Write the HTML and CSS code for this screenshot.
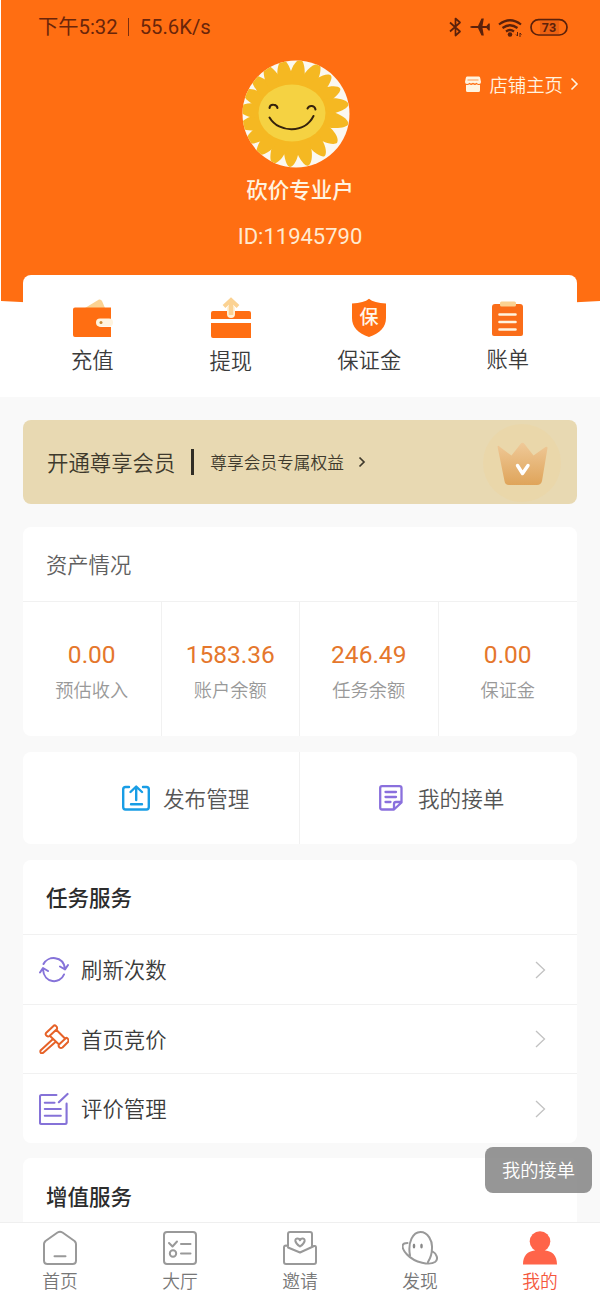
FILE: index.html
```html
<!DOCTYPE html>
<html lang="zh-CN">
<head>
<meta charset="utf-8">
<title>我的</title>
<link rel="stylesheet" href="styles.css">
</head>
<body>
<main class="page">
  <section class="hero">
    <svg class="hero-bg" viewBox="0 0 600 310" preserveAspectRatio="none"><path d="M1 0H600V301Q300 318 1 301Z" fill="#ff6e12"/></svg>
    <header class="status">
      <span class="status-text">下午5:32<i class="status-sep"></i>55.6K/s</span>
      <svg class="status-icons" viewBox="0 0 122 24" width="122" height="24" fill="none" stroke="#5b210b">
        <path d="M2 7.5L12 16.5L7.5 20.5V3.500L12 7.500L2 16.500" stroke-width="1.700" stroke-linejoin="round"/>
        <path d="M22 12Q22.500 10.900 24.500 10.900H30L33.500 3.500H35.800L34.500 10.900H38.500L40.500 8.500H41.800V15.500H40.500L38.500 13.100H34.500L35.800 20.500H33.500L30 13.100H24.500Q22.500 13.100 22 12Z" fill="#5b210b" stroke="none"/>
        <g stroke-width="2.200"><path d="M51 9.500Q62 1 73 9.500"/><path d="M54.500 13Q62 7.500 69.500 13"/><path d="M58 16.500Q62 13.500 66 16.500"/></g>
        <circle cx="62" cy="19.500" r="2.300" fill="#5b210b" stroke="none"/>
        <path d="M69.500 17V21M69.500 21L68 19.500M72 22V18L73.500 19.500" stroke-width="1"/>
        <rect x="83" y="4.700" width="36" height="15.300" rx="7.650" stroke-width="1.700"/>
        <path d="M92 5.500H111V19.200H92Z" fill="#d65413" stroke="none" opacity=".45"/>
        <text x="101" y="16.800" text-anchor="middle" class="battery">73</text>
      </svg>
    </header>
    <a class="shop">
      <svg width="18" height="18" viewBox="0 0 18 18"><path d="M3 1.500H15Q16 1.500 16.200 3L17 7Q17 9 15 9Q13.500 9 12.700 7.800Q11 9.300 9 7.800Q7 9.300 5.300 7.800Q4.500 9 3 9Q1 9 1 7L1.800 3Q2 1.500 3 1.500Z" fill="#fff4e0"/><path d="M2 9.800Q4 10.500 5.500 9.300Q7 10.500 9 9.300Q11 10.500 12.700 9.300Q14 10.500 16 9.800V15.500Q16 17 14.500 17H3.500Q2 17 2 15.500Z" fill="#fff4e0"/><path d="M3.500 5H14.500" stroke="#ff8a3d" stroke-width=".9"/></svg>
      <span>店铺主页</span>
      <svg width="9" height="14" viewBox="0 0 9 14"><path d="M1.500 1.500L7 7L1.500 12.500" fill="none" stroke="#fff4e0" stroke-width="1.600"/></svg>
    </a>
    <div class="profile">
      <svg class="avatar" width="108" height="108" viewBox="0 0 108 108">
        <defs><clipPath id="disc"><circle cx="54" cy="54" r="53.500"/></clipPath><path id="petal" d="M-7 -28C-9.500 -40 -4 -54 1 -54C5 -54 9 -40 7 -28Z"/></defs>
        <circle cx="54" cy="54" r="53.500" fill="#fbf8f1"/>
        <g clip-path="url(#disc)"><g transform="translate(50 53)" fill="#f5b822">
          <ellipse rx="37" ry="34"/>
          <use href="#petal" transform="rotate(8)"/><use href="#petal" transform="rotate(28) scale(1.030)"/><use href="#petal" transform="rotate(45)"/><use href="#petal" transform="rotate(62)"/><use href="#petal" transform="rotate(80) scale(1.060)"/><use href="#petal" transform="rotate(100) scale(1.060)"/><use href="#petal" transform="rotate(122) scale(1.100 1)"/><use href="#petal" transform="rotate(142)"/><use href="#petal" transform="rotate(162) scale(1.020)"/><use href="#petal" transform="rotate(181)"/><use href="#petal" transform="rotate(200)"/><use href="#petal" transform="rotate(219)"/><use href="#petal" transform="rotate(237)"/><use href="#petal" transform="rotate(255)"/><use href="#petal" transform="rotate(274)"/><use href="#petal" transform="rotate(293)"/><use href="#petal" transform="rotate(312)"/><use href="#petal" transform="rotate(330)"/><use href="#petal" transform="rotate(349)"/>
        </g></g>
        <ellipse cx="50" cy="53" rx="33.500" ry="28.500" fill="#f5d242"/>
        <g fill="none" stroke="#35220c" stroke-width="2" stroke-linecap="round"><path d="M27.500 48Q28 44.500 31.500 44.800Q35 45 35.500 48"/><path d="M65.500 48.500Q67 45.500 70 46Q73 46.500 73.500 49.500"/><path d="M27.500 57.500C37 73.500 63 73.500 71.500 56"/></g>
      </svg>
      <h1 class="name">砍价专业户</h1>
      <p class="uid">ID:11945790</p>
    </div>
    <nav class="wallet">
      <a class="wallet-item"><svg width="42" height="40" viewBox="0 0 42 40"><path d="M14 10L28 1.500Q30 1 31 3L34 10Z" fill="#fbd292"/><path d="M4 9.500H40V21H31Q26 21 26 25Q26 29 31 29H40V39H4Q2 39 2 37V11.500Q2 9.500 4 9.500Z" fill="#ff6e12"/><rect x="25" y="20.500" width="17" height="8" rx="4" fill="#fff4df"/><circle cx="30" cy="24.500" r="1.500" fill="#c98a32"/></svg><span>充值</span></a>
      <a class="wallet-item w2"><svg width="42" height="42" viewBox="0 0 42 42"><path d="M3 14H39Q41 14 41 16V22H1V16Q1 14 3 14ZM1 26H41V41H3Q1 41 1 39Z" fill="#ff6e12"/><path d="M21 17V5M14 9.500L21 3L28 9.500" fill="none" stroke="#fbd292" stroke-width="4"/><path d="M21 12V17" stroke="#fff1d6" stroke-width="8" stroke-linecap="round"/><path d="M21 6V18" stroke="#fbd292" stroke-width="4.500"/></svg><span>提现</span></a>
      <a class="wallet-item"><svg width="42" height="40" viewBox="0 0 42 40"><path d="M21 .7Q26 5 38 5.500V20C38 29 32 35.500 21 39C10 35.500 4 29 4 20V5.500Q16 5 21 .7Z" fill="#ff6e12"/><text x="21" y="25.500" class="shield-text" text-anchor="middle">保</text></svg><span>保证金</span></a>
      <a class="wallet-item w4"><svg width="42" height="38" viewBox="0 0 42 38"><path d="M8 5H33Q36 5 36 8V35Q36 37 34 37H7Q5 37 5 35V8Q5 5 8 5Z" fill="#fa6d19"/><rect x="13" y="2.500" width="16" height="5" rx="1.500" fill="#fbd292"/><path d="M12.500 15.500H28.500M12.500 23H28.500M12.500 30.500H28.500" stroke="#fff4df" stroke-width="2.600" stroke-linecap="round"/></svg><span>账单</span></a>
    </nav>
  </section>

  <section class="vip">
    <span class="vip-title">开通尊享会员</span><i class="vip-bar"></i><span class="vip-sub">尊享会员专属权益</span>
    <svg class="vip-arrow" width="8" height="12" viewBox="0 0 8 12"><path d="M1.500 1.500L6 6L1.500 10.500" fill="none" stroke="#3e392c" stroke-width="1.700"/></svg>
    <svg class="crown" width="80" height="84" viewBox="0 0 80 84"><defs><linearGradient id="gold" x2="0" y2="1"><stop stop-color="#efc998"/><stop offset="1" stop-color="#dfa45a"/></linearGradient></defs><circle cx="40" cy="43" r="39" fill="#ead7aa"/><path d="M15.500 26.500Q16 25 18 27L29.500 35.500L38.500 24Q40.500 21.500 42.500 24L51.500 35.500L63.500 27Q65.500 26 65.500 28L60 61Q59 65 55 65H27Q23 65 22.500 61L16 29Z" fill="url(#gold)"/><path d="M35.500 45.500L40.500 53.500L46 45.500" fill="none" stroke="#fff" stroke-width="3.400" stroke-linecap="round" stroke-linejoin="round"/></svg>
  </section>

  <section class="card assets">
    <h2 class="assets-title">资产情况</h2>
    <div class="stats">
      <div class="stat"><b>0.00</b><span>预估收入</span></div>
      <div class="stat"><b>1583.36</b><span>账户余额</span></div>
      <div class="stat"><b>246.49</b><span>任务余额</span></div>
      <div class="stat"><b>0.00</b><span>保证金</span></div>
    </div>
  </section>

  <section class="card manage">
    <a class="manage-item publish"><svg width="28" height="26" viewBox="0 0 28 26" fill="none" stroke="#189de5" stroke-width="2.400" stroke-linecap="round" stroke-linejoin="round"><path d="M7 2H3.500Q1.200 2 1.200 4.300V22Q1.200 24.500 3.500 24.500H24.500Q26.800 24.500 26.800 22V4.300Q26.800 2 24.500 2H21M14.200 15V2.500M8.500 7L14.200 1.500L20 7M9 19.300H20"/></svg><span>发布管理</span></a>
    <a class="manage-item orders"><svg width="24" height="26" viewBox="0 0 24 26" fill="none" stroke="#8a70dd" stroke-width="2.300" stroke-linecap="round" stroke-linejoin="round"><path d="M15 24.500H3Q1.200 24.500 1.200 22.500V3Q1.200 1.200 3 1.200H20.500Q22.500 1.200 22.500 3V17.500L15 24.500V19Q15 17 17 17H22M6.500 7H17M6.500 12H17M6.500 17H11.500"/></svg><span>我的接单</span></a>
  </section>

  <section class="card services">
    <h2 class="services-title">任务服务</h2>
    <a class="row"><svg width="30" height="30" viewBox="0 0 30 30" fill="none" stroke="#8673d9" stroke-width="2" stroke-linecap="round" stroke-linejoin="round"><path d="M4.500 9C9 .5 24 .5 26 13.500M21 11.500L26 14.500L29 10M25 19.500C21 29.500 5 28.500 4 14.500M1 17.500L4 13L9 16"/></svg><span>刷新次数</span><svg class="go" width="12" height="18" viewBox="0 0 12 18"><path d="M1 1L9.500 9L1 17"/></svg></a>
    <a class="row"><svg width="30" height="30" viewBox="0 0 30 30" fill="none" stroke="#e66228" stroke-width="2" stroke-linejoin="round"><path d="M15 1.500L7 9Q6 11 8 12Q9 13 10.500 12L18 5Q18.500 3 17 2Q16 1 15 1.500ZM27 14L20 20.500Q19 22 20.500 23.500Q22 24.500 23.500 23.500L29 18Q30 16.500 29 15Q28 13.500 27 14ZM17.500 6L26 14.500M11 12L20 20.500M14 15L1.500 26.500Q1 28 2 29Q3.500 29.500 4.500 28.500L17 17.500"/></svg><span>首页竞价</span><svg class="go" width="12" height="18" viewBox="0 0 12 18"><path d="M1 1L9.500 9L1 17"/></svg></a>
    <a class="row"><svg width="31" height="34" viewBox="1 0 31 34" fill="none" stroke="#8572d8" stroke-width="2.200" stroke-linecap="round" stroke-linejoin="round"><path d="M19 2.500H3.500Q2 2.500 2 4.500V31Q2 32.500 3.500 32.500H28Q29.500 32.500 29.500 31V11.500M21.500 10L30.500 1.500M7 10.500H17M7 17H23.500M7 24H23.500"/></svg><span>评价管理</span><svg class="go" width="12" height="18" viewBox="0 0 12 18"><path d="M1 1L9.500 9L1 17"/></svg></a>
  </section>

  <section class="card services extra">
    <h2 class="services-title">增值服务</h2>
  </section>
</main>

<nav class="tabs">
  <a class="tab"><svg viewBox="0 0 36 36"><path d="M3.500 11L15.500 2.500Q18 1 20.500 2.500L32.500 11Q34 12.500 34 14V30.500Q34 34 30.500 34H5.500Q2 34 2 30.500V14Q2 12.500 3.500 11ZM12.500 26.300H23.500"/></svg><span>首页</span></a>
  <a class="tab"><svg viewBox="0 0 36 36"><rect x="2" y="2" width="32" height="32" rx="3"/><path d="M7 13L10.500 16.500L15 11.500M19 14H28.500M19 23.500H28.500"/><circle cx="11" cy="23.500" r="3.200"/></svg><span>大厅</span></a>
  <a class="tab"><svg viewBox="0 0 36 36"><path d="M6 16V4Q6 2 8 2H28Q30 2 30 4V16M6 16L4 15.500Q2 15.500 2 17.500V32Q2 34 4 34H32Q34 34 34 32V17.500Q34 15.500 32 16L30 17L18 22.500L6 17.500M18 16.500C12 12.500 12.500 8.500 15.500 8.500Q17.300 8.500 18 10.300Q18.700 8.500 20.500 8.500C23.500 8.500 24 12.500 18 16.500Z"/></svg><span>邀请</span></a>
  <a class="tab"><svg viewBox="0 0 36 36"><path d="M8 25.500C5.500 12 11 2 18.500 2C26 2 30.500 11 30 18C30 24 28.500 28 26 32M5.500 13C-1 13 -1 18 5 24.500C13 33 28 35.500 33 32C37 29 34.500 23.500 30 21"/><ellipse class="dot" cx="12" cy="16" rx="1.300" ry="2.600"/><ellipse class="dot" cx="19.500" cy="16" rx="1.300" ry="2.600"/></svg><span>发现</span></a>
  <a class="tab active"><svg viewBox="0 0 36 36"><circle cx="18" cy="11.500" r="10.300"/><path d="M1 34.500C1 25.500 6 21 12.500 20.500L18 18L23.500 20.500C30 21 35 25.500 35 34.500Z"/></svg><span>我的</span></a>
</nav>
<div class="toast">我的接单</div>
</body>
</html>
```
FILE: styles.css
```css
* { box-sizing: border-box; }
body { margin: 0; width: 600px; height: 1300px; overflow: hidden; position: relative; background: #f9f9f9; color: #3b3b3b; font-family: Roboto, "Noto Sans CJK SC", sans-serif; font-weight: 350; }
h1, h2, p { margin: 0; }
svg { display: block; flex: none; }
.page { height: 1222px; overflow: hidden; }
.hero { position: relative; height: 397px; background: #fff; padding: 0 23px; }
.hero-bg { position: absolute; left: 0; top: 0; width: 600px; height: 310px; }
.status { position: relative; height: 54px; padding: 0 7px 0 15px; display: flex; justify-content: space-between; align-items: center; color: #6a250a; }
.status-icons { margin-top: -1px; }
.status-text { display: flex; align-items: center; font-size: 20.300px; line-height: 24px; font-weight: 400; }
.status-sep { width: 1px; height: 18px; margin: 0 11px 0 10px; background: #7d2e0d; }
.battery { font: 700 12.500px Roboto, sans-serif; fill: #5b210b; stroke: none; }
.shop { position: absolute; right: 21px; top: 70px; height: 28px; display: flex; align-items: center; gap: 7px; color: #fff4e0; font-size: 18.400px; }
.profile { position: relative; height: 221px; padding-top: 6px; display: flex; flex-direction: column; align-items: center; }
.avatar { margin-right: 8px; }
.name { margin-top: 10px; font-size: 21.500px; line-height: 26px; font-weight: 500; color: #fff4e0; }
.uid { margin-top: 20px; font-size: 22px; line-height: 26px; font-weight: 400; color: #ffead0; }
.wallet { position: relative; height: 122px; background: #fff; border-radius: 8px 8px 0 0; display: grid; grid-template-columns: repeat(4, 1fr); }
.wallet-item { padding-top: 23px; display: flex; flex-direction: column; align-items: center; gap: 8px; font-size: 21.300px; line-height: 30px; }
.w2 { padding-top: 22px; }
.w4 { padding-top: 24px; }
.shield-text { font: 500 19px "Noto Sans CJK SC", sans-serif; fill: #fff8ec; }
.vip { position: relative; height: 84px; margin: 23px 23px 0; padding: 0 15px 0 24px; border-radius: 8px; background: #e8d9b2; color: #3e392c; display: flex; align-items: center; }
.vip-title { margin-top: -2px; font-size: 21.400px; }
.vip-bar { width: 3px; height: 26px; margin: 0 16px; background: #302d25; }
.vip-sub { font-size: 16.700px; }
.vip-arrow { margin-left: 14px; }
.crown { margin-left: auto; }
.card { margin: 16px 23px 0; border-radius: 8px; background: #fff; overflow: hidden; }
.assets { margin-top: 23px; height: 209px; }
.assets-title { height: 75px; padding-left: 23px; border-bottom: 1px solid #f1f1f1; font-size: 21.300px; line-height: 78px; font-weight: 350; color: #606060; }
.stats { height: 134px; display: grid; grid-template-columns: repeat(4, 1fr); }
.stat { padding-top: 37px; display: flex; flex-direction: column; align-items: center; border-right: 1px solid #f1f1f1; }
.stat:last-child { border: 0; }
.stat b { font-size: 24.500px; line-height: 32px; font-weight: 400; color: #e5772c; }
.stat span { margin-top: 7px; font-size: 18.200px; line-height: 26px; color: #999; }
.manage { height: 92px; display: grid; grid-template-columns: 1fr 1fr; }
.manage-item { display: flex; align-items: center; gap: 13px; font-size: 21.600px; color: #555; }
.manage-item span { margin-top: -1px; }
.publish { padding-left: 99px; border-right: 1px solid #f1f1f1; }
.orders { padding-left: 79px; gap: 15px; }
.services { height: 283px; }
.services-title { height: 74px; padding-left: 23px; font-size: 21.500px; line-height: 77px; font-weight: 500; color: #2c2c2c; }
.row { height: 69.500px; padding: 1px 30px 0 16px; border-top: 1px solid #f1f1f1; display: flex; align-items: center; font-size: 21.400px; }
.row > svg:first-child { width: 30px; }
.row span { flex: 1; margin: -2px 0 0 12px; }
.go { fill: none; stroke: #c2c2c2; stroke-width: 1.300; }
.extra { margin-top: 15px; height: 100px; }
.extra .services-title { line-height: 79px; }
.tabs { height: 78px; padding-top: 7px; background: #fff; border-top: 1px solid #efefef; display: grid; grid-template-columns: repeat(5, 1fr); }
.tab { display: flex; flex-direction: column; align-items: center; gap: 3px; font-size: 17.800px; line-height: 26px; color: #777; }
.tab svg { width: 36px; height: 36px; fill: none; stroke: #999; stroke-width: 2; stroke-linecap: round; stroke-linejoin: round; }
.tab .dot { fill: #888; stroke: none; }
.tab.active { color: #f5573d; }
.tab.active svg { fill: #ff6449; stroke: none; }
.toast { position: absolute; left: 485px; top: 1147px; width: 107px; height: 46px; border-radius: 8px; background: rgba(130, 130, 130, .84); color: #fff; font-size: 18.300px; line-height: 47px; text-align: center; }
```
